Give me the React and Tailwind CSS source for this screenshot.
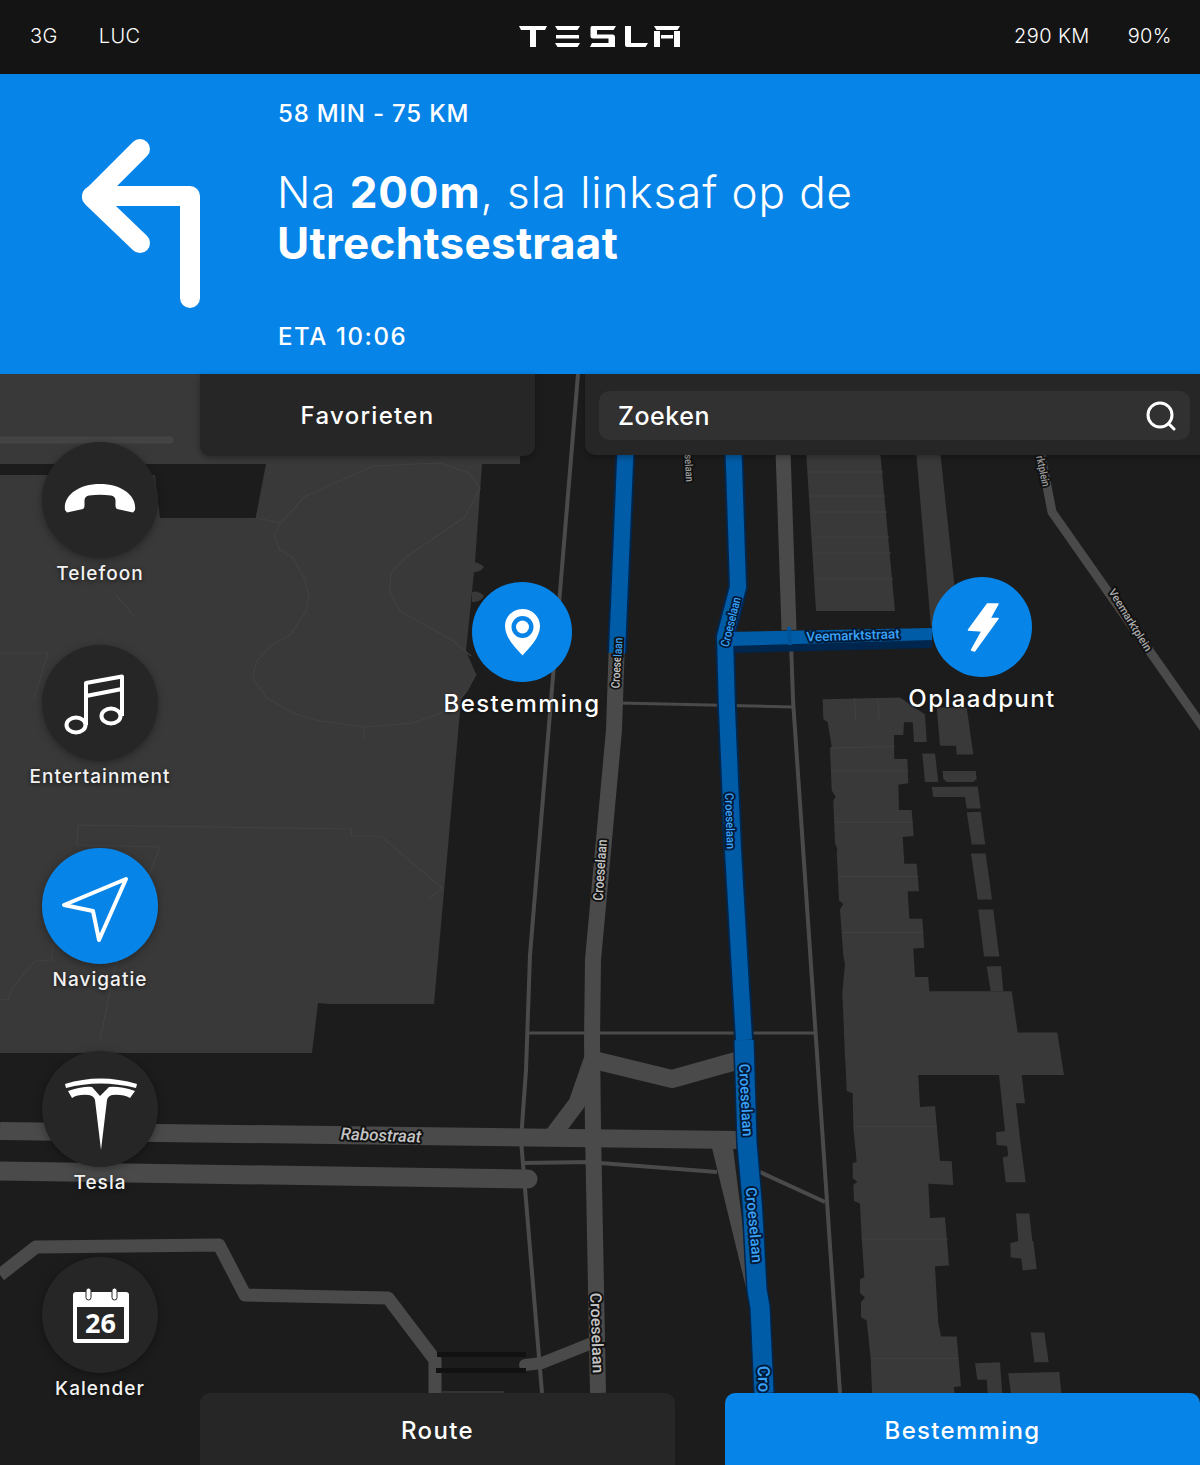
import React from "react";

const FONT = "font-['Inter','Noto_Sans',sans-serif]";
const ROAD = "#4a4a4a";
const BLD = "#393939";
const FAINT = "#414141";

const z8 = (pts) => pts.map(([x, y]) => `${(800 + x / 3).toFixed(1)},${(680 + y / 2.178).toFixed(1)}`).join(" ");

const buildings = [
  [[68,42],[300,38],[375,75],[380,135],[342,135],[338,92],[312,92],[310,120],[282,120],[283,172],[322,172],[325,225],[295,228],[297,283],[335,283],[341,340],[308,342],[313,400],[350,400],[357,460],[323,460],[328,520],[367,520],[373,583],[340,585],[345,647],[385,647],[388,678],[635,678],[653,768],[772,768],[792,860],[355,860],[360,930],[405,928],[420,1047],[455,1048],[460,1100],[385,1097],[390,1172],[435,1170],[447,1275],[405,1277],[410,1345],[415,1400],[423,1430],[470,1430],[483,1538],[462,1540],[465,1568],[217,1568],[212,1478],[200,1395],[183,1388],[183,1355],[195,1345],[180,1335],[180,1305],[193,1300],[185,1215],[180,1140],[162,1135],[160,1100],[172,1093],[158,1085],[158,1052],[170,1050],[160,975],[158,900],[140,895],[138,858],[135,820],[127,680],[135,620],[130,600],[120,500],[130,488],[117,480],[110,375],[112,368],[105,355],[100,262],[107,255],[95,240],[90,150],[95,145],[83,92],[70,85]],
  [[410,60],[500,60],[520,162],[470,162],[468,143],[420,143]],
  [[367,160],[405,160],[415,222],[375,222]],
  [[428,198],[527,198],[530,215],[520,222],[440,222],[430,215]],
  [[395,233],[533,232],[542,280],[500,280],[495,255],[400,255]],
  [[500,288],[542,287],[556,358],[515,358]],
  [[513,378],[557,378],[576,478],[533,478]],
  [[535,500],[580,500],[598,602],[552,602]],
  [[560,624],[603,623],[610,678],[572,678]],
  [[597,860],[665,860],[675,922],[648,922],[660,1000],[677,1094],[617,1094],[608,1040],[625,1037],[621,1015],[590,1013],[588,985],[615,982]],
  [[648,1162],[688,1162],[697,1222],[700,1222],[710,1283],[668,1286],[664,1260],[632,1258],[631,1226],[655,1222]],
  [[692,1421],[733,1421],[746,1486],[703,1486]],
  [[525,1488],[600,1486],[608,1568],[565,1568],[560,1524],[532,1524]],
  [[625,1510],[778,1507],[786,1568],[635,1568]],
];

const buildingSeams = [
  [[163,40],[168,88]],[[233,40],[238,90]],[[90,148],[283,145]],[[93,198],[325,198]],[[105,310],[338,310]],[[115,428],[355,428]],[[127,550],[370,550]],
  [[165,973],[410,973]],[[185,1218],[443,1218]],[[212,1478],[475,1478]],
];

function Label({ x, y, r, size = 12, sx = 1, fill = "#c4c4c4", halo = "#111", weight = 500, italic, children }) {
  return (
    <text
      transform={`translate(${x} ${y}) rotate(${r}) scale(${sx} 1)`}
      textAnchor="middle"
      dominantBaseline="central"
      fontSize={size}
      fontWeight={weight}
      fontStyle={italic ? "italic" : "normal"}
      fontFamily="Roboto, sans-serif"
      fill={fill}
      stroke={halo}
      strokeWidth="4"
      strokeLinejoin="round"
      paintOrder="stroke"
    >
      {children}
    </text>
  );
}

function MapArt() {
  const blue = "#3aa2f7";
  const gray = "#c4c4c4";
  const navy = "#00264d";
  const haloBlue = "#001a38";
  return (
    <svg className="absolute inset-0 w-full h-full" viewBox="0 374 1200 1091" fill="none">
      <rect x="0" y="374" width="1200" height="1091" fill="#1c1c1c" />
      {/* park */}
      <polygon
        fill={BLD}
        points="0,374 520,374 520,464 482,464 475,562 466,651 476,674 461,700 434,1004 329,1004 318,1003 312,1053 0,1053"
      />
      <polygon fill="#1c1c1c" points="0,464 266,464 255.6,518 160,518 155,475 0,475" />
      <path d="M474 562 q6 1 10 5 q-3 5 -10 5Z M472 592 q6 -2 12 4 q-3 6 -12 6Z" fill={BLD} />
      <line x1="0" y1="440" x2="170" y2="440" stroke="#444" strokeWidth="7" strokeLinecap="round" />
      <g stroke={FAINT} strokeWidth="1.2">
        <polyline points="256,518 281,523 274,534 279,549 293,558 304,578 309,595 306,611 291,634 269,647 256,662 253,679 267,698 295,714 320,721 364,727 413,723 452,709 467,691 476,674" />
        <polyline points="281,523 304,497 373,466 440,463 469,473 480,488 465,517 406,557 391,573 390,592 400,611 452,640 471,656" />
        <polyline points="0,653 48,653 34,698" />
        <polyline points="116,595 135,617" />
        <polyline points="77,844 78,825 352,829 351,836 381,836 442,888 429,899" />
        <polyline points="76,845 160,847 115,967 100,1040" />
        <polyline points="53,943 52,960 35,961 13,987 8,999 0,1000" />
        <polyline points="364,727 364,740" />
      </g>
      {/* top block */}
      <polygon fill={BLD} points="806,450 880,450 895,611 816,611" />
      <g stroke={FAINT} strokeWidth="1.2">
        <line x1="808" y1="472" x2="883" y2="472" />
        <line x1="810" y1="496" x2="885" y2="496" />
        <line x1="811" y1="512" x2="887" y2="512" />
        <line x1="812" y1="537" x2="889" y2="537" />
        <line x1="813" y1="553" x2="891" y2="553" />
        <line x1="815" y1="579" x2="893" y2="579" />
      </g>
      <polygon fill={BLD} points="916,450 940,450 956,600 931,627" />
      {/* buildings */}
      {buildings.map((b, i) => (
        <polygon key={i} fill={BLD} points={z8(b)} />
      ))}
      <g stroke={FAINT} strokeWidth="1">
        {buildingSeams.map((s, i) => (
          <polyline key={i} points={z8(s)} />
        ))}
      </g>
      {/* roads */}
      <g stroke={ROAD} strokeLinejoin="round">
        <polyline points="578,374 530,955 526,1070 521,1140 542,1393" strokeWidth="4" />
        <polyline points="791,642 793,700 840,1393" strokeWidth="4" />
        <line x1="620" y1="703" x2="793" y2="707" strokeWidth="3" />
        <line x1="528" y1="1033" x2="815" y2="1033" strokeWidth="3" />
        <polyline points="522,1163 590,1162 600,1163 717,1172" strokeWidth="4" />
        <polyline points="760,1172 825,1202" strokeWidth="4" />
        <polyline points="783,450 789,630" strokeWidth="15" />
        <polyline points="1040,450 1052,512 1205,730" strokeWidth="9" />
        <polyline points="617,640 614,730 593,960 592,1040 593,1130 598,1393" strokeWidth="16" />
        <polyline points="598,1061 672,1079 736,1061" strokeWidth="18" />
        <polyline points="592,1060 577,1103 553,1135" strokeWidth="17" />
        <line x1="0" y1="1131" x2="737" y2="1140" strokeWidth="18" />
        <line x1="0" y1="1171" x2="528" y2="1179" strokeWidth="19" strokeLinecap="round" />
        <polyline points="0,1275 36,1247 219,1245 245,1295 388,1298 435,1360 435,1393" strokeWidth="13" />
        <polyline points="525,1365 542,1363 592,1343" strokeWidth="12" strokeLinecap="round" />
      </g>
      <polygon fill={ROAD} points="712,1148 733,1148 752,1300 749,1300" />
      <rect x="437" y="1352" width="89" height="5" fill="#111" />
      <rect x="436" y="1368" width="90" height="5" fill="#111" />
      <rect x="442" y="1391" width="62" height="2" fill="#333" />
      {/* route */}
      <g strokeLinejoin="miter">
        <polygon fill={navy} points="733,639 932,630 932,648 733,653" />
        <polyline points="625.500,450 617,653" stroke={navy} strokeWidth="20" />
        <polyline points="733.500,450 738,587 725,637 727,710 733,850 744,1040" stroke={navy} strokeWidth="20" />
        <polyline points="744,1040 747,1143 752.500,1207 757,1290 760,1307 764,1393" stroke={navy} strokeWidth="22" />
        <polygon fill="#005ca6" points="728,632 932,628 932,640 728,646" />
        <polyline points="625.500,450 617,653" stroke="#005ca6" strokeWidth="16" />
        <polyline points="733.500,450 738,587 725,637 727,710 733,850 744,1040" stroke="#005ca6" strokeWidth="16" />
        <polyline points="744,1040 747,1143 752.500,1207 757,1290 760,1307 764,1393" stroke="#005ca6" strokeWidth="19" />
      </g>
      <polyline points="789,627 790,645" stroke="#00549a" strokeWidth="4" />
      {/* labels */}
      <Label x={617} y={663} r={-87} size={12} sx={0.84} fill={gray}>
        Croese<tspan fill={blue}>laan</tspan>
      </Label>
      <Label x={731} y={622} r={-76} size={12} sx={0.84} fill={blue} halo={haloBlue}>Croeselaan</Label>
      <Label x={853} y={635} r={-2} size={13.5} fill={blue} halo={haloBlue}>Veemarktstraat</Label>
      <Label x={600} y={870} r={-86} size={14} sx={0.87} fill={gray}>Croeselaan</Label>
      <Label x={689} y={468} r={87} size={11} sx={0.85} fill="#9a9a9a">selaan</Label>
      <Label x={1043} y={471} r={78} size={11} sx={0.85} fill="#9a9a9a">rktplein</Label>
      <Label x={1130} y={620} r={58} size={11} fill="#aaaaaa">Veemarktplein</Label>
      <Label x={730} y={821} r={88} size={12} sx={0.93} fill={blue} halo={haloBlue}>Croeselaan</Label>
      <Label x={746} y={1100} r={87} size={15} sx={0.96} fill={blue} halo={haloBlue}>Croeselaan</Label>
      <Label x={754} y={1225} r={85} size={15} fill={blue} halo={haloBlue}>Croeselaan</Label>
      <Label x={597} y={1333} r={88} size={16} fill={gray}>Croeselaan</Label>
      <Label x={764} y={1379} r={88} size={17} fill={blue} halo={haloBlue}>Cro</Label>
      <Label x={381} y={1135} r={2} size={17} fill={gray} italic>Rabostraat</Label>
    </svg>
  );
}

function TeslaWordmark() {
  return (
    <svg width="162" height="24" viewBox="519 25 162 24" fill="#fff">
      <path d="M519 26H547L545 30H536V47H530V30H521Z" />
      <path d="M555 26H580L577.5 30H557.5Z M556 35H579V38.5H556Z M555 43H580L577.5 47H557.5Z" />
      <path d="M592 26H616L613.5 30H597V34.5H613Q615 34.5 615 37V47H590L592 43H608.5V38.5H593Q590.5 38.5 590.5 36V28Q590.5 26 592 26Z" />
      <path d="M625 26H631V43H648L645.5 47H627Q625 47 625 45Z" />
      <path d="M654 26H680L677.5 30H656.5Z M654 31H660V47H654Z M674 31H680V47H674Z M661 35H673V38.5H661Z" />
    </svg>
  );
}

const Phone = () => (
  <svg className="w-[116px] h-[116px]" viewBox="42 443 116 116" fill="#fff">
    <path d="M65 511C63 497 78 485 100 485C122 485 137 497 135 511L133 513.5L117 510Q115.5 509 115.5 507V501Q115 497 111 496.5Q100 495 89 496.5Q85 497 84.5 501V507Q84.5 509 83 510L67 513.5Z" />
  </svg>
);

const Music = () => (
  <svg className="w-[116px] h-[116px]" viewBox="42 646 116 116" fill="none" stroke="#fff" strokeWidth="4" strokeLinejoin="round">
    <ellipse cx="76" cy="726" rx="9.5" ry="7.5" />
    <ellipse cx="111" cy="717" rx="9.5" ry="7.5" />
    <path d="M86 726V684L122 677.5V717" />
    <path d="M86 697L122 690" />
  </svg>
);

const Nav = () => (
  <svg className="w-[116px] h-[116px]" viewBox="42 848 116 116" fill="none" stroke="#fff" strokeWidth="4" strokeLinejoin="round">
    <path d="M64 905L126 879L99 940L93 911Z" />
  </svg>
);

const TeslaT = () => (
  <svg className="w-[116px] h-[116px]" viewBox="42 1051 116 116" fill="#fff">
    <path d="M65 1084Q100 1073 137 1084L136 1088Q100 1079 66 1088Z" />
    <path d="M68 1091Q84 1086 92 1087L100 1096L109 1087Q120 1086 135 1091L130 1098Q123 1094 112 1095Q108 1096 107 1100L101 1150L95 1100Q94 1096 89 1095Q78 1094 72 1098Z" />
  </svg>
);

const Calendar = () => (
  <svg className="w-[116px] h-[116px]" viewBox="42 1257 116 116">
    <rect x="73" y="1292" width="56" height="51" rx="3" fill="#fff" />
    <rect x="77" y="1307" width="47" height="32" fill="#262626" />
    <rect x="86" y="1288" width="5" height="12" rx="2.5" fill="#fff" stroke="#262626" strokeWidth="1" />
    <rect x="112" y="1288" width="5" height="12" rx="2.5" fill="#fff" stroke="#262626" strokeWidth="1" />
    <text x="100.5" y="1333" textAnchor="middle" fontSize="27" fontWeight="700" fontFamily="'Open Sans', sans-serif" fill="#fff">26</text>
  </svg>
);

const PinIcon = () => (
  <svg className="w-[100px] h-[100px]" viewBox="472 582 100 100">
    <path d="M522.5 609C532 609 540 616.500 540 626C540 638 529 648 522.5 655.500C516 648 505 638 505 626C505 616.500 513 609 522.500 609Z" fill="#fff" />
    <circle cx="522.500" cy="627" r="11" fill="#0784e8" />
    <circle cx="522.500" cy="627" r="6.500" fill="#fff" />
  </svg>
);

const BoltIcon = () => (
  <svg className="w-[100px] h-[100px]" viewBox="932 577 100 100" fill="#fff" stroke="#fff" strokeWidth="1.5" strokeLinejoin="round">
    <path d="M987.500 604H998L990 618.500H998L974.500 651L971.500 650L982 631L968.500 630Z" />
  </svg>
);

const SIDE = [
  { label: "Telefoon", icon: <Phone /> },
  { label: "Entertainment", icon: <Music /> },
  { label: "Navigatie", icon: <Nav />, active: true },
  { label: "Tesla", icon: <TeslaT /> },
  { label: "Kalender", icon: <Calendar />, extra: "mt-[3px]" },
];

function SideItem({ label, icon, active, extra }) {
  return (
    <div className={`flex flex-col items-center h-[203px] ${extra || ""}`}>
      <div className={`w-[116px] h-[116px] rounded-full shadow-[0_2px_8px_rgba(0,0,0,0.35)] ${active ? "bg-[#0784e8]" : "bg-[#262626]"}`}>
        {icon}
      </div>
      <div className="mt-[2px] h-[28px] leading-[28px] text-[19px] font-medium tracking-[1.05px] text-[#f2f2f2] [text-shadow:0_1px_4px_rgba(0,0,0,0.7)]">
        {label}
      </div>
    </div>
  );
}

function Pin({ pos, label, icon }) {
  return (
    <div className={`absolute flex flex-col items-center w-[200px] ${pos}`}>
      <div className="w-[100px] h-[100px] rounded-full bg-[#0784e8]">{icon}</div>
      <div className="mt-[6px] h-[32px] leading-[32px] text-[24px] font-medium tracking-[1.4px] text-white [text-shadow:0_1px_3px_rgba(0,0,0,0.5)]">
        {label}
      </div>
    </div>
  );
}

export default function App() {
  return (
    <div className={`w-[1200px] h-[1465px] overflow-hidden flex flex-col bg-[#1c1c1c] text-white ${FONT}`}>
      <header className="h-[74px] shrink-0 bg-[#141414] flex items-center justify-between pl-[30px] pr-[28px] pb-[2px] relative">
        <div className="flex gap-[41px] text-[20px] font-light tracking-[0.4px]">
          <span>3G</span>
          <span>LUC</span>
        </div>
        <div className="absolute left-[519px] top-[25px] flex">
          <TeslaWordmark />
        </div>
        <div className="flex gap-[38px] text-[20px] font-light tracking-[0.4px]">
          <span>290 KM</span>
          <span>90%</span>
        </div>
      </header>

      <section className="h-[300px] shrink-0 bg-[#0784e8] flex">
        <div className="w-[277px] shrink-0 flex items-center justify-start">
          <svg width="277" height="300" viewBox="0 74 277 300" fill="none" stroke="#fff" strokeWidth="20" strokeLinecap="round" strokeLinejoin="round">
            <path d="M140 149L92 197L140 243" />
            <path d="M92 196H190V298" />
          </svg>
        </div>
        <div className="flex flex-col pt-[22px]">
          <div className="h-[36px] leading-[36px] text-[24px] font-medium tracking-[0.8px] pl-[1px]">58 MIN - 75 KM</div>
          <div className="mt-[35px] text-[44px] leading-[51px] font-light tracking-[0.9px]">
            Na <b className="font-bold">200m</b>, sla linksaf op de
            <br />
            <b className="font-bold tracking-[0.3px]">Utrechtsestraat</b>
          </div>
          <div className="mt-[50px] h-[36px] leading-[36px] text-[24px] font-medium tracking-[1.6px] pl-[1px]">ETA 10:06</div>
        </div>
      </section>

      <main className="relative flex-1">
        <MapArt />

        <div className="absolute top-0 left-[200px] right-0 flex gap-[50px] items-start">
          <div className="w-[335px] h-[82px] pt-[2px] bg-[#262626] rounded-b-[10px] shadow-[0_2px_6px_rgba(0,0,0,0.3)] flex items-center justify-center text-[24px] font-medium tracking-[1.3px]">
            Favorieten
          </div>
          <div className="flex-1 h-[81px] bg-[#262626] rounded-bl-[10px] shadow-[0_2px_6px_rgba(0,0,0,0.3)] pl-[14px] pr-[10px] pt-[17px]">
            <div className="h-[49px] bg-[#313131] rounded-[10px] flex items-center justify-between pl-[19px] pr-[14px]">
              <span className="text-[25px] pt-[2px] font-medium tracking-[0.5px]">Zoeken</span>
              <svg width="30" height="30" viewBox="0 0 30 30" fill="none" stroke="#fff" strokeWidth="3" strokeLinecap="round">
                <circle cx="14" cy="14" r="12" />
                <path d="M22.500 22.500L28 28" />
              </svg>
            </div>
          </div>
        </div>

        <div className="absolute left-0 top-[68px] w-[200px] flex flex-col items-center">
          {SIDE.map((s) => (
            <SideItem key={s.label} {...s} />
          ))}
        </div>

        <Pin pos="left-[422px] top-[208px]" label="Bestemming" icon={<PinIcon />} />
        <Pin pos="left-[882px] top-[203px]" label="Oplaadpunt" icon={<BoltIcon />} />

        <div className="absolute bottom-0 left-[200px] right-0 h-[72px] flex gap-[50px]">
          <div className="flex-1 pt-[4px] bg-[#262626] rounded-t-[10px] flex items-center justify-center text-[24px] font-medium tracking-[1.4px]">
            Route
          </div>
          <div className="flex-1 pt-[4px] bg-[#0784e8] rounded-t-[10px] flex items-center justify-center text-[24px] font-medium tracking-[1.3px]">
            Bestemming
          </div>
        </div>
      </main>
    </div>
  );
}
